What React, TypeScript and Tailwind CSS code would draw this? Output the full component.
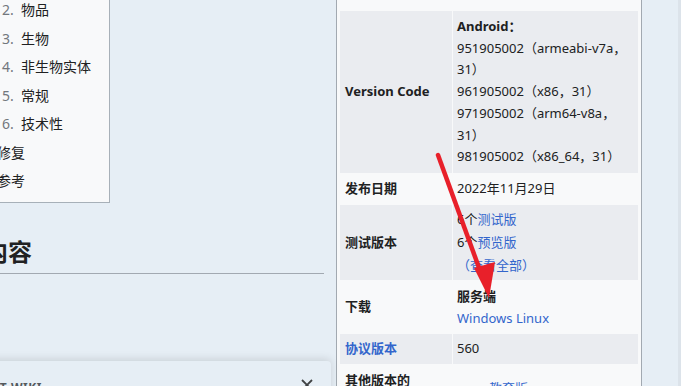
import React from 'react';

const font = "font-['Noto_Sans','Noto_Sans_CJK_SC',sans-serif]";

const tocItems: { num?: string; label: string }[] = [
  { num: '12.', label: '物品' },
  { num: '13.', label: '生物' },
  { num: '14.', label: '非生物实体' },
  { num: '15.', label: '常规' },
  { num: '16.', label: '技术性' },
  { label: '修复' },
  { label: '参考' },
];

const versionCodes = [
  '951905002（armeabi-v7a，',
  '31）',
  '961905002（x86，31）',
  '971905002（arm64-v8a，',
  '31）',
  '981905002（x86_64，31）',
];

const Row: React.FC<{ head: React.ReactNode; gray?: boolean; h: string; children: React.ReactNode }> = ({
  head,
  gray,
  h,
  children,
}) => (
  <div className={`grid grid-cols-[112px_185px] gap-x-[1px] ${h}`}>
    <div className={`flex items-center pl-[5px] font-bold ${gray ? 'bg-[#eaecf0]' : ''}`}>{head}</div>
    <div className={`flex flex-col justify-center pl-[4px] ${gray ? 'bg-[#eaecf0]' : ''}`}>{children}</div>
  </div>
);

export default function App() {
  return (
    <div className={`relative flex w-[681px] h-[386px] overflow-hidden bg-[#e6eef5] text-[#202122] ${font}`}>
      {/* left column */}
      <div className="w-[336px] shrink-0">
        <div className="ml-[-40px] w-[150px] h-[207px] bg-[#f8f9fa] border-r border-b border-[#a7b0b8]">
          <ul className="mt-[-4px] text-[14px]">
            {tocItems.map((it) => (
              <li key={it.label} className="flex leading-[28.5px] h-[28.5px]">
                {it.num ? (
                  <>
                    <span className="w-[61px] pl-[34px] text-[#72777d]">{it.num}</span>
                    <span>{it.label}</span>
                  </>
                ) : (
                  <span className="pl-[37px]">{it.label}</span>
                )}
              </li>
            ))}
          </ul>
        </div>
        <div className="ml-[-16px] mt-[34px] w-[340px] border-b border-[#a2a9b1] pb-[6px]">
          <h2 className="text-[24px] font-bold leading-[30px]">内容</h2>
        </div>
      </div>

      {/* infobox */}
      <div className="w-[306px] shrink-0 h-full border-x border-[#a2a9b1] bg-[#f8f9fa] px-[3px] pt-[11px] text-[13px]">
        <Row head="Version Code" gray h="h-[162px]">
          <div className="leading-[21.8px]">
            <div className="font-bold">Android：</div>
            {versionCodes.map((v, i) => (
              <div key={i}>{v}</div>
            ))}
          </div>
        </Row>
        <Row head="发布日期" h="h-[32px]">
          <div>2022年11月29日</div>
        </Row>
        <Row head="测试版本" gray h="h-[75px]">
          <div className="leading-[23px]">
            <div>
              6个<span className="text-[#3366cc]">测试版</span>
            </div>
            <div>
              6个<span className="text-[#3366cc]">预览版</span>
            </div>
            <div className="text-[#3366cc]">（查看全部）</div>
          </div>
        </Row>
        <Row head="下载" h="h-[54px]">
          <div className="leading-[22px]">
            <div className="font-bold">服务端</div>
            <div className="text-[#3366cc]">Windows Linux</div>
          </div>
        </Row>
        <Row head={<span className="text-[#3366cc]">协议版本</span>} gray h="h-[30px]">
          <div>560</div>
        </Row>
        <div className="grid grid-cols-[112px_185px] gap-x-[1px] h-[40px]">
          <div className="pl-[5px] pt-[7px] font-bold leading-[18px]">其他版本的</div>
          <div className="pl-[22px] pt-[15px] flex items-start gap-[9px] leading-[18px]">
            <span className="mt-[7px] w-[5px] h-[5px] rounded-full bg-[#202122]" />
            <span className="text-[#3366cc]">教育版</span>
          </div>
        </div>
      </div>

      <div className="flex-1" />
      <div className="w-[3px] bg-[#dce3ea]" />

      {/* floating panel */}
      <div className="absolute left-[-10px] top-[361px] w-[341px] h-[40px] rounded-[4px] bg-[#e6eef5] shadow-[0_-2px_8px_rgba(0,0,0,0.12)]">
        <div className="flex items-start justify-between pr-[18px] pt-[18px]">
          <span className="ml-[-27px] text-[12px] font-bold tracking-[0.5px] text-[#54595d]">ABOUT WIKI</span>
          <svg width="12" height="12" viewBox="0 0 12 12">
            <path d="M1 1 L11 11 M11 1 L1 11" stroke="#404244" strokeWidth="1.8" />
          </svg>
        </div>
      </div>

      {/* red annotation arrow */}
      <svg className="absolute left-0 top-0 pointer-events-none" width="681" height="386">
        <line x1="438" y1="155" x2="482" y2="276" stroke="#e8202a" strokeWidth="4.5" strokeLinecap="round" />
        <polygon points="489,298 474,268 495,262" fill="#e8202a" />
      </svg>
    </div>
  );
}
